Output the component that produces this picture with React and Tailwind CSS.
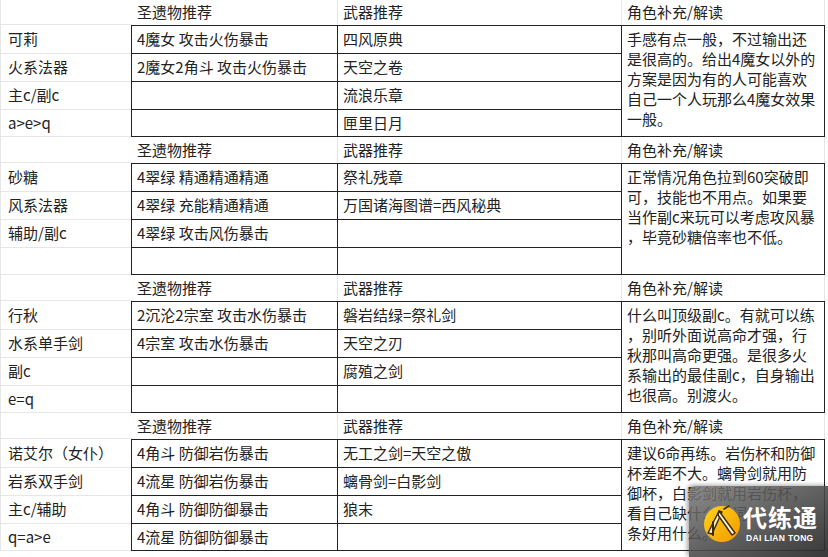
import React from "react";

const FONT = { fontFamily: '"Noto Sans CJK SC", "Noto Sans", sans-serif' };

const blocks = [
  {
    headerH: "h-[25px]",
    labels: ["可莉", "火系法器", "主c/副c", "a>e>q"],
    arts: ["4魔女 攻击火伤暴击", "2魔女2角斗 攻击火伤暴击", "", ""],
    weapons: ["四风原典", "天空之卷", "流浪乐章", "匣里日月"],
    notes: [
      "手感有点一般，不过输出还",
      "是很高的。给出4魔女以外的",
      "方案是因为有的人可能喜欢",
      "自己一个人玩那么4魔女效果",
      "一般。",
    ],
  },
  {
    headerH: "h-[26px]",
    labels: ["砂糖", "风系法器", "辅助/副c", ""],
    arts: ["4翠绿 精通精通精通", "4翠绿 充能精通精通", "4翠绿 攻击风伤暴击", ""],
    weapons: ["祭礼残章", "万国诸海图谱=西风秘典", "", ""],
    notes: [
      "正常情况角色拉到60突破即",
      "可，技能也不用点。如果要",
      "当作副c来玩可以考虑攻风暴",
      "，毕竟砂糖倍率也不低。",
    ],
  },
  {
    headerH: "h-[26px]",
    labels: ["行秋", "水系单手剑", "副c", "e=q"],
    arts: ["2沉沦2宗室 攻击水伤暴击", "4宗室 攻击水伤暴击", "", ""],
    weapons: ["磐岩结绿=祭礼剑", "天空之刃", "腐殖之剑", ""],
    notes: [
      "什么叫顶级副c。有就可以练",
      "，别听外面说高命才强，行",
      "秋那叫高命更强。是很多火",
      "系输出的最佳副c，自身输出",
      "也很高。别渡火。",
    ],
  },
  {
    headerH: "h-[26px]",
    labels: ["诺艾尔（女仆）", "岩系双手剑", "主c/辅助", "q=a>e"],
    arts: ["4角斗 防御岩伤暴击", "4流星 防御岩伤暴击", "4角斗 防御防御暴击", "4流星 防御防御暴击"],
    weapons: ["无工之剑=天空之傲", "螭骨剑=白影剑", "狼末", ""],
    notes: [
      "建议6命再练。岩伤杯和防御",
      "杯差距不大。螭骨剑就用防",
      "御杯，白影剑就用岩伤杯，",
      "看自己缺什么主词",
      "条好用什么。",
    ],
  },
];

const rowH = ["h-[28px]", "h-[28px]", "h-[28px]", "h-[27px]"];

function Block({ b }) {
  return (
    <div className="flex flex-col">
      <div className={`flex ${b.headerH}`}>
        <div className="w-[132px] shrink-0 border-b border-l border-[#e6e6e6]" />
        <div className="w-[206px] shrink-0 pl-[5px] flex items-center border-r border-[#e6e6e6] whitespace-nowrap">
          圣遗物推荐
        </div>
        <div className="w-[284px] shrink-0 pl-[5px] flex items-center border-r border-[#e6e6e6] whitespace-nowrap">
          武器推荐
        </div>
        <div className="w-[203px] shrink-0 pl-[5px] flex items-center border-r border-[#e6e6e6] whitespace-nowrap">
          角色补充/解读
        </div>
      </div>
      <div className="flex">
        <div className="w-[131px] shrink-0 flex flex-col pt-[1px] border-l border-[#e6e6e6]">
          {b.labels.map((l, i) => (
            <div
              key={i}
              className={`${rowH[i]} pl-[7px] flex items-center border-b border-[#e6e6e6] whitespace-nowrap`}
            >
              {l}
            </div>
          ))}
        </div>
        <div className="grid grid-cols-[206px_284px_203px] grid-rows-[28px_28px_28px_27px] border-t border-l border-[#222]">
          {[0, 1, 2, 3].map((i) => (
            <React.Fragment key={i}>
              <div
                className="pl-[5px] flex items-center border-r border-b border-[#222] whitespace-nowrap"
                style={{ gridRow: i + 1, gridColumn: 1 }}
              >
                {b.arts[i]}
              </div>
              <div
                className="pl-[5px] flex items-center border-r border-b border-[#222] whitespace-nowrap"
                style={{ gridRow: i + 1, gridColumn: 2 }}
              >
                {b.weapons[i]}
              </div>
            </React.Fragment>
          ))}
          <div className="col-start-3 row-start-1 row-span-4 border-r border-b border-[#222] pl-[5px] pt-[3px] leading-[20px]">
            {b.notes.map((n, i) => (
              <div key={i} className="whitespace-nowrap">
                {n}
              </div>
            ))}
          </div>
        </div>
      </div>
    </div>
  );
}

function Logo() {
  return (
    <svg width="40" height="40" viewBox="0 0 40 40">
      <defs>
        <linearGradient id="lg" x1="0" y1="0" x2="1" y2="1">
          <stop offset="0" stopColor="#ffd21a" />
          <stop offset="1" stopColor="#f29a00" />
        </linearGradient>
      </defs>
      <circle cx="20" cy="21" r="18" fill="url(#lg)" />
      <path d="M6 30 L17 8 L20 9 L10 31 Z" fill="#f7e9c0" stroke="#3a2a10" strokeWidth="1.4" strokeLinejoin="round" />
      <path d="M17 8 L33 30 L30 32 L16 12 Z" fill="#fff4d6" stroke="#3a2a10" strokeWidth="1.4" strokeLinejoin="round" />
      <path d="M11 19 L11 32" stroke="#3a2a10" strokeWidth="2" strokeLinecap="round" />
      <path d="M22 6 L27 3" stroke="#3a2a10" strokeWidth="1.6" strokeLinecap="round" />
    </svg>
  );
}

export default function App() {
  return (
    <div
      className="relative w-[828px] h-[557px] overflow-hidden bg-white text-[15px] text-[#222]"
      style={FONT}
    >
      <div className="flex flex-col">
        {blocks.map((b, i) => (
          <Block key={i} b={b} />
        ))}
      </div>
      <div className="absolute left-[689px] top-[486px] right-0 bottom-0 rounded-tl-[6px] bg-linear-to-br from-[rgba(120,120,120,0.85)] to-[rgba(40,40,40,0.92)] shadow-[-2px_-1px_4px_rgba(0,0,0,0.35)]">
        <div className="absolute left-[13px] top-[17px]">
          <Logo />
        </div>
        <div className="absolute left-[54px] top-[17px] text-white font-bold text-[24px] leading-[28px] tracking-[1px] whitespace-nowrap">
          代练通
        </div>
        <div
          className="absolute left-[57px] top-[47px] text-white font-bold text-[8.5px] leading-[10px] tracking-[0.3px] whitespace-nowrap"
          style={{ fontFamily: '"Liberation Sans", sans-serif' }}
        >
          DAI LIAN TONG
        </div>
      </div>
    </div>
  );
}
